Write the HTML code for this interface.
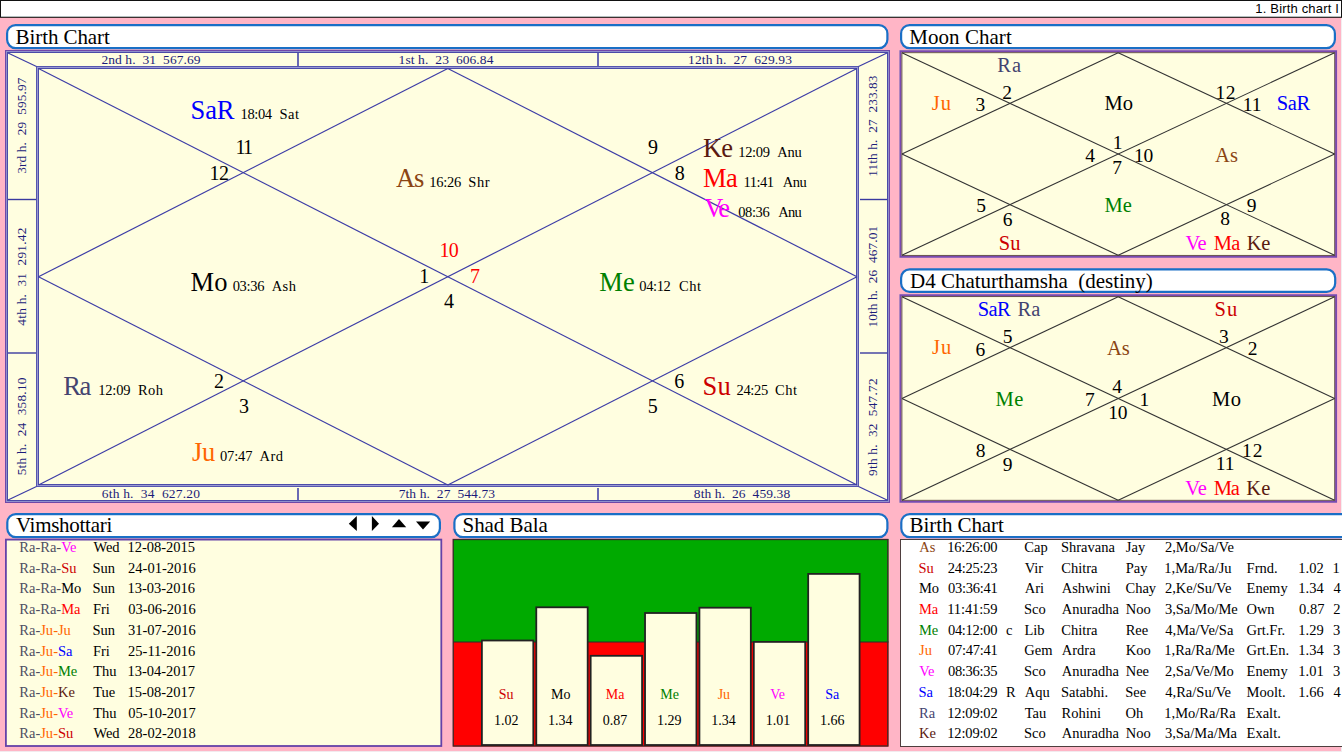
<!DOCTYPE html><html><head><meta charset="utf-8"><style>html,body{margin:0;padding:0;background:#ffb5c6;overflow:hidden;width:1342px;height:752px}svg{display:block}text{white-space:pre}</style></head><body>
<svg width="1342" height="752" viewBox="0 0 1342 752" shape-rendering="auto">
<rect x="0" y="0" width="1342" height="752" fill="#ffb5c6"/>
<rect x="0" y="751" width="1342" height="1" fill="#f2eaee"/>
<rect x="0" y="0" width="1342" height="18" fill="#fff"/>
<rect x="0" y="0" width="1342" height="1" fill="#111"/>
<rect x="0" y="0" width="1" height="18" fill="#111"/>
<rect x="1341" y="0" width="1" height="18" fill="#111"/>
<rect x="1" y="16" width="1340" height="1" fill="#b4bebe"/>
<rect x="0" y="17" width="1342" height="1" fill="#3e3030"/>
<rect x="1341" y="18" width="1" height="734" fill="#f2eef0"/>
<text x="1255.31" y="13.40" font-size="13.00" fill="#000" font-family="Liberation Sans" textLength="83.59" lengthAdjust="spacing">1. Birth chart I</text>
<rect x="7.10" y="25.10" width="880.30" height="23.00" rx="8.5" ry="8.5" fill="#fff" stroke="#1a6fc6" stroke-width="2.20"/>
<text x="15.60" y="43.70" font-size="21.00" fill="#000" font-family="Liberation Serif" textLength="94.23" lengthAdjust="spacing">Birth Chart</text>
<rect x="901.10" y="25.10" width="433.80" height="23.00" rx="8.5" ry="8.5" fill="#fff" stroke="#1a6fc6" stroke-width="2.20"/>
<text x="909.30" y="43.80" font-size="21.00" fill="#000" font-family="Liberation Serif" textLength="102.43" lengthAdjust="spacing">Moon Chart</text>
<rect x="901.10" y="269.40" width="434.10" height="22.40" rx="8.5" ry="8.5" fill="#fff" stroke="#1a6fc6" stroke-width="2.20"/>
<text x="910.10" y="288.00" font-size="21.00" fill="#000" font-family="Liberation Serif" textLength="242.63" lengthAdjust="spacing">D4 Chaturthamsha  (destiny)</text>
<rect x="7.30" y="514.10" width="432.60" height="23.00" rx="8.5" ry="8.5" fill="#fff" stroke="#1a6fc6" stroke-width="2.20"/>
<text x="15.96" y="532.30" font-size="21.00" fill="#000" font-family="Liberation Serif" textLength="96.34" lengthAdjust="spacing">Vimshottari</text>
<rect x="454.40" y="514.10" width="433.00" height="23.00" rx="8.5" ry="8.5" fill="#fff" stroke="#1a6fc6" stroke-width="2.20"/>
<text x="462.50" y="532.30" font-size="21.00" fill="#000" font-family="Liberation Serif" textLength="85.29" lengthAdjust="spacing">Shad Bala</text>
<rect x="901.30" y="514.10" width="457.60" height="23.00" rx="8.5" ry="8.5" fill="#fff" stroke="#1a6fc6" stroke-width="2.20"/>
<text x="909.60" y="532.30" font-size="21.00" fill="#000" font-family="Liberation Serif" textLength="94.23" lengthAdjust="spacing">Birth Chart</text>
<rect x="5.0" y="50.0" width="885.0" height="453.0" fill="#fffee0"/>
<rect x="5.5" y="50.5" width="884.0" height="452.0" fill="none" stroke="#7048a8" stroke-width="1"/>
<rect x="6.5" y="51.5" width="882.0" height="450.0" fill="none" stroke="#9090cc" stroke-width="1"/>
<rect x="7.5" y="52.5" width="880.0" height="448.0" fill="none" stroke="#4a4aa8" stroke-width="1"/>
<rect x="36.5" y="66.5" width="822" height="420" fill="none" stroke="#5656ae" stroke-width="1"/>
<rect x="37.5" y="67.5" width="820" height="418" fill="none" stroke="#9a9ad2" stroke-width="1"/>
<rect x="38.5" y="68.5" width="818" height="416" fill="none" stroke="#4c4ca8" stroke-width="1"/>
<line x1="298.0" y1="53.0" x2="298.0" y2="66.0" stroke="#5a5ab0" stroke-width="1.8"/>
<line x1="298.0" y1="488.0" x2="298.0" y2="500.0" stroke="#5a5ab0" stroke-width="1.8"/>
<line x1="598.0" y1="53.0" x2="598.0" y2="66.0" stroke="#5a5ab0" stroke-width="1.8"/>
<line x1="598.0" y1="488.0" x2="598.0" y2="500.0" stroke="#5a5ab0" stroke-width="1.8"/>
<line x1="8.0" y1="199.5" x2="36.0" y2="199.5" stroke="#3a3aa0" stroke-width="1.4"/>
<line x1="860.0" y1="199.5" x2="887.0" y2="199.5" stroke="#3a3aa0" stroke-width="1.4"/>
<line x1="8.0" y1="353.0" x2="36.0" y2="353.0" stroke="#3a3aa0" stroke-width="1.4"/>
<line x1="860.0" y1="353.0" x2="887.0" y2="353.0" stroke="#3a3aa0" stroke-width="1.4"/>
<line x1="8.0" y1="53.0" x2="36.5" y2="66.5" stroke="#3c3ca6" stroke-width="1.2"/>
<line x1="887.0" y1="53.0" x2="858.5" y2="66.5" stroke="#3c3ca6" stroke-width="1.2"/>
<line x1="8.0" y1="500.0" x2="36.5" y2="486.5" stroke="#3c3ca6" stroke-width="1.2"/>
<line x1="887.0" y1="500.0" x2="858.5" y2="486.5" stroke="#3c3ca6" stroke-width="1.2"/>
<line x1="38.5" y1="68.5" x2="857.0" y2="485.0" stroke="#3c3ca6" stroke-width="1.2"/>
<line x1="857.0" y1="68.5" x2="38.5" y2="485.0" stroke="#3c3ca6" stroke-width="1.2"/>
<line x1="447.8" y1="68.5" x2="857.0" y2="276.8" stroke="#3c3ca6" stroke-width="1.2"/>
<line x1="857.0" y1="276.8" x2="447.8" y2="485.0" stroke="#3c3ca6" stroke-width="1.2"/>
<line x1="447.8" y1="485.0" x2="38.5" y2="276.8" stroke="#3c3ca6" stroke-width="1.2"/>
<line x1="38.5" y1="276.8" x2="447.8" y2="68.5" stroke="#3c3ca6" stroke-width="1.2"/>
<text x="101.41" y="63.60" font-size="13.50" fill="#1c1c7a" font-family="Liberation Serif" textLength="99.15" lengthAdjust="spacing">2nd h.  31  567.69</text>
<text x="398.61" y="63.60" font-size="13.50" fill="#1c1c7a" font-family="Liberation Serif" textLength="94.80" lengthAdjust="spacing">1st h.  23  606.84</text>
<text x="688.11" y="63.60" font-size="13.50" fill="#1c1c7a" font-family="Liberation Serif" textLength="103.81" lengthAdjust="spacing">12th h.  27  629.93</text>
<text x="101.72" y="497.50" font-size="13.50" fill="#1c1c7a" font-family="Liberation Serif" textLength="98.29" lengthAdjust="spacing">6th h.  34  627.20</text>
<text x="398.67" y="497.50" font-size="13.50" fill="#1c1c7a" font-family="Liberation Serif" textLength="96.29" lengthAdjust="spacing">7th h.  27  544.73</text>
<text x="693.85" y="497.50" font-size="13.50" fill="#1c1c7a" font-family="Liberation Serif" textLength="96.30" lengthAdjust="spacing">8th h.  26  459.38</text>
<text x="0" y="0" font-size="13.3" fill="#1c1c7a" font-family="Liberation Serif" textLength="96.12" lengthAdjust="spacing" transform="translate(25.50 173.74) rotate(-90)">3rd h.  29  595.97</text>
<text x="0" y="0" font-size="13.3" fill="#1c1c7a" font-family="Liberation Serif" textLength="98.19" lengthAdjust="spacing" transform="translate(25.50 325.76) rotate(-90)">4th h.  31  291.42</text>
<text x="0" y="0" font-size="13.3" fill="#1c1c7a" font-family="Liberation Serif" textLength="97.88" lengthAdjust="spacing" transform="translate(25.50 475.37) rotate(-90)">5th h.  24  358.10</text>
<text x="0" y="0" font-size="13.3" fill="#1c1c7a" font-family="Liberation Serif" textLength="101.29" lengthAdjust="spacing" transform="translate(876.60 176.77) rotate(-90)">11th h.  27  233.83</text>
<text x="0" y="0" font-size="13.3" fill="#1c1c7a" font-family="Liberation Serif" textLength="101.57" lengthAdjust="spacing" transform="translate(876.60 327.47) rotate(-90)">10th h.  26  467.01</text>
<text x="0" y="0" font-size="13.3" fill="#1c1c7a" font-family="Liberation Serif" textLength="97.56" lengthAdjust="spacing" transform="translate(876.60 475.93) rotate(-90)">9th h.  32  547.72</text>
<text x="190.43" y="118.60" font-size="26.50" fill="#0000ff" font-family="Liberation Serif" textLength="44.11" lengthAdjust="spacing">SaR</text>
<text x="240.53" y="118.60" font-size="14.50" fill="#000" font-family="Liberation Serif" textLength="31.50" lengthAdjust="spacing">18:04</text>
<text x="279.43" y="118.60" font-size="14.50" fill="#000" font-family="Liberation Serif" textLength="19.65" lengthAdjust="spacing">Sat</text>
<text x="395.94" y="187.00" font-size="26.50" fill="#8b4513" font-family="Liberation Serif" textLength="28.32" lengthAdjust="spacing">As</text>
<text x="429.33" y="187.00" font-size="14.50" fill="#000" font-family="Liberation Serif" textLength="31.91" lengthAdjust="spacing">16:26</text>
<text x="468.23" y="187.00" font-size="14.50" fill="#000" font-family="Liberation Serif" textLength="21.40" lengthAdjust="spacing">Shr</text>
<text x="703.04" y="157.00" font-size="26.50" fill="#5a1a10" font-family="Liberation Serif" textLength="29.88" lengthAdjust="spacing">Ke</text>
<text x="738.23" y="157.00" font-size="14.50" fill="#000" font-family="Liberation Serif" textLength="31.67" lengthAdjust="spacing">12:09</text>
<text x="777.36" y="157.00" font-size="14.50" fill="#000" font-family="Liberation Serif" textLength="24.29" lengthAdjust="spacing">Anu</text>
<text x="703.04" y="186.80" font-size="26.50" fill="#ff0000" font-family="Liberation Serif" textLength="34.63" lengthAdjust="spacing">Ma</text>
<text x="743.53" y="186.80" font-size="14.50" fill="#000" font-family="Liberation Serif" textLength="30.35" lengthAdjust="spacing">11:41</text>
<text x="782.66" y="186.80" font-size="14.50" fill="#000" font-family="Liberation Serif" textLength="24.19" lengthAdjust="spacing">Anu</text>
<text x="704.20" y="216.70" font-size="26.50" fill="#ff00ff" font-family="Liberation Serif" textLength="25.82" lengthAdjust="spacing">Ve</text>
<text x="738.25" y="216.70" font-size="14.50" fill="#000" font-family="Liberation Serif" textLength="31.48" lengthAdjust="spacing">08:36</text>
<text x="778.16" y="216.70" font-size="14.50" fill="#000" font-family="Liberation Serif" textLength="23.49" lengthAdjust="spacing">Anu</text>
<text x="190.54" y="290.50" font-size="26.50" fill="#000000" font-family="Liberation Serif" textLength="36.87" lengthAdjust="spacing">Mo</text>
<text x="232.65" y="290.50" font-size="14.50" fill="#000" font-family="Liberation Serif" textLength="31.78" lengthAdjust="spacing">03:36</text>
<text x="271.66" y="290.50" font-size="14.50" fill="#000" font-family="Liberation Serif" textLength="24.33" lengthAdjust="spacing">Ash</text>
<text x="599.14" y="290.70" font-size="26.50" fill="#008000" font-family="Liberation Serif" textLength="35.58" lengthAdjust="spacing">Me</text>
<text x="639.35" y="290.70" font-size="14.50" fill="#000" font-family="Liberation Serif" textLength="31.45" lengthAdjust="spacing">04:12</text>
<text x="678.91" y="290.70" font-size="14.50" fill="#000" font-family="Liberation Serif" textLength="22.18" lengthAdjust="spacing">Cht</text>
<text x="63.24" y="394.50" font-size="26.50" fill="#444470" font-family="Liberation Serif" textLength="28.13" lengthAdjust="spacing">Ra</text>
<text x="98.13" y="394.50" font-size="14.50" fill="#000" font-family="Liberation Serif" textLength="32.47" lengthAdjust="spacing">12:09</text>
<text x="138.08" y="394.50" font-size="14.50" fill="#000" font-family="Liberation Serif" textLength="24.81" lengthAdjust="spacing">Roh</text>
<text x="191.94" y="460.60" font-size="26.50" fill="#ff6600" font-family="Liberation Serif" textLength="23.41" lengthAdjust="spacing">Ju</text>
<text x="219.95" y="460.60" font-size="14.50" fill="#000" font-family="Liberation Serif" textLength="32.47" lengthAdjust="spacing">07:47</text>
<text x="259.46" y="460.60" font-size="14.50" fill="#000" font-family="Liberation Serif" textLength="23.62" lengthAdjust="spacing">Ard</text>
<text x="702.53" y="394.70" font-size="26.50" fill="#cc0000" font-family="Liberation Serif" textLength="28.23" lengthAdjust="spacing">Su</text>
<text x="736.46" y="394.70" font-size="14.50" fill="#000" font-family="Liberation Serif" textLength="31.70" lengthAdjust="spacing">24:25</text>
<text x="774.91" y="394.70" font-size="14.50" fill="#000" font-family="Liberation Serif" textLength="22.18" lengthAdjust="spacing">Cht</text>
<text x="235.44" y="153.60" font-size="20.00" fill="#000" font-family="Liberation Serif" textLength="17.56" lengthAdjust="spacing">11</text>
<text x="209.44" y="179.80" font-size="20.00" fill="#000" font-family="Liberation Serif" textLength="19.56" lengthAdjust="spacing">12</text>
<text x="647.96" y="154.00" font-size="20.00" fill="#000" font-family="Liberation Serif">9</text>
<text x="674.74" y="180.10" font-size="20.00" fill="#000" font-family="Liberation Serif">8</text>
<text x="439.54" y="256.60" font-size="20.00" fill="#ff0000" font-family="Liberation Serif" textLength="19.22" lengthAdjust="spacing">10</text>
<text x="419.24" y="283.20" font-size="20.00" fill="#000" font-family="Liberation Serif">1</text>
<text x="469.88" y="282.60" font-size="20.00" fill="#ff0000" font-family="Liberation Serif">7</text>
<text x="443.91" y="308.30" font-size="20.00" fill="#000" font-family="Liberation Serif">4</text>
<text x="214.02" y="388.00" font-size="20.00" fill="#000" font-family="Liberation Serif">2</text>
<text x="239.04" y="413.10" font-size="20.00" fill="#000" font-family="Liberation Serif">3</text>
<text x="674.14" y="387.90" font-size="20.00" fill="#000" font-family="Liberation Serif">6</text>
<text x="647.84" y="412.70" font-size="20.00" fill="#000" font-family="Liberation Serif">5</text>
<rect x="899.4" y="50.2" width="437.7" height="207.6" fill="#fffee0"/>
<rect x="900.4" y="51.2" width="435.7" height="205.6" fill="none" stroke="#7a48b0" stroke-width="2"/>
<rect x="901.9" y="52.7" width="432.8" height="202.7" fill="none" stroke="#584040" stroke-width="0.9"/>
<line x1="901.9" y1="52.7" x2="1334.6" y2="255.3" stroke="#333" stroke-width="1.1"/>
<line x1="1334.6" y1="52.7" x2="901.9" y2="255.3" stroke="#333" stroke-width="1.1"/>
<line x1="1118.2" y1="52.7" x2="1334.6" y2="154.0" stroke="#333" stroke-width="1.1"/>
<line x1="1334.6" y1="154.0" x2="1118.2" y2="255.3" stroke="#333" stroke-width="1.1"/>
<line x1="1118.2" y1="255.3" x2="901.9" y2="154.0" stroke="#333" stroke-width="1.1"/>
<line x1="901.9" y1="154.0" x2="1118.2" y2="52.7" stroke="#333" stroke-width="1.1"/>
<rect x="899.4" y="294.2" width="437.7" height="208.6" fill="#fffee0"/>
<rect x="900.4" y="295.2" width="435.7" height="206.6" fill="none" stroke="#7a48b0" stroke-width="2"/>
<rect x="901.9" y="296.6" width="432.8" height="203.7" fill="none" stroke="#584040" stroke-width="0.9"/>
<line x1="901.9" y1="296.7" x2="1334.6" y2="500.3" stroke="#333" stroke-width="1.1"/>
<line x1="1334.6" y1="296.7" x2="901.9" y2="500.3" stroke="#333" stroke-width="1.1"/>
<line x1="1118.2" y1="296.7" x2="1334.6" y2="398.5" stroke="#333" stroke-width="1.1"/>
<line x1="1334.6" y1="398.5" x2="1118.2" y2="500.3" stroke="#333" stroke-width="1.1"/>
<line x1="1118.2" y1="500.3" x2="901.9" y2="398.5" stroke="#333" stroke-width="1.1"/>
<line x1="901.9" y1="398.5" x2="1118.2" y2="296.7" stroke="#333" stroke-width="1.1"/>
<text x="997.31" y="72.20" font-size="20.50" fill="#444470" font-family="Liberation Serif" textLength="23.77" lengthAdjust="spacing">Ra</text>
<text x="1002.14" y="98.50" font-size="19.50" fill="#000" font-family="Liberation Serif">2</text>
<text x="975.57" y="111.30" font-size="19.50" fill="#000" font-family="Liberation Serif">3</text>
<text x="931.77" y="110.20" font-size="20.50" fill="#ff6600" font-family="Liberation Serif" textLength="19.28" lengthAdjust="spacing">Ju</text>
<text x="1085.22" y="161.80" font-size="19.50" fill="#000" font-family="Liberation Serif">4</text>
<text x="976.17" y="212.20" font-size="19.50" fill="#000" font-family="Liberation Serif">5</text>
<text x="1002.76" y="226.00" font-size="19.50" fill="#000" font-family="Liberation Serif">6</text>
<text x="998.83" y="250.30" font-size="20.50" fill="#cc0000" font-family="Liberation Serif" textLength="21.72" lengthAdjust="spacing">Su</text>
<text x="1215.59" y="98.80" font-size="19.50" fill="#000" font-family="Liberation Serif" textLength="19.89" lengthAdjust="spacing">12</text>
<text x="1242.69" y="111.40" font-size="19.50" fill="#000" font-family="Liberation Serif" textLength="18.69" lengthAdjust="spacing">11</text>
<text x="1276.83" y="110.20" font-size="20.50" fill="#0000ff" font-family="Liberation Serif" textLength="33.40" lengthAdjust="spacing">SaR</text>
<text x="1104.51" y="110.10" font-size="20.50" fill="#000" font-family="Liberation Serif" textLength="28.37" lengthAdjust="spacing">Mo</text>
<text x="1112.69" y="149.20" font-size="19.50" fill="#000" font-family="Liberation Serif">1</text>
<text x="1112.21" y="173.90" font-size="19.50" fill="#000" font-family="Liberation Serif">7</text>
<text x="1134.09" y="161.80" font-size="19.50" fill="#000" font-family="Liberation Serif" textLength="19.26" lengthAdjust="spacing">10</text>
<text x="1215.10" y="161.70" font-size="20.50" fill="#8b4513" font-family="Liberation Serif" textLength="22.94" lengthAdjust="spacing">As</text>
<text x="1104.51" y="211.60" font-size="20.50" fill="#008000" font-family="Liberation Serif" textLength="27.40" lengthAdjust="spacing">Me</text>
<text x="1246.67" y="212.30" font-size="19.50" fill="#000" font-family="Liberation Serif">9</text>
<text x="1220.26" y="225.20" font-size="19.50" fill="#000" font-family="Liberation Serif">8</text>
<text x="1185.57" y="250.40" font-size="20.50" fill="#ff00ff" font-family="Liberation Serif" textLength="20.94" lengthAdjust="spacing">Ve</text>
<text x="1213.81" y="250.40" font-size="20.50" fill="#ff0000" font-family="Liberation Serif" textLength="26.57" lengthAdjust="spacing">Ma</text>
<text x="1246.71" y="250.40" font-size="20.50" fill="#5a1a10" font-family="Liberation Serif" textLength="23.60" lengthAdjust="spacing">Ke</text>
<text x="977.63" y="316.00" font-size="20.50" fill="#0000ff" font-family="Liberation Serif" textLength="33.00" lengthAdjust="spacing">SaR</text>
<text x="1017.41" y="316.00" font-size="20.50" fill="#444470" font-family="Liberation Serif" textLength="22.87" lengthAdjust="spacing">Ra</text>
<text x="1002.87" y="343.00" font-size="19.50" fill="#000" font-family="Liberation Serif">5</text>
<text x="975.56" y="356.00" font-size="19.50" fill="#000" font-family="Liberation Serif">6</text>
<text x="931.97" y="354.40" font-size="20.50" fill="#ff6600" font-family="Liberation Serif" textLength="19.38" lengthAdjust="spacing">Ju</text>
<text x="995.41" y="405.90" font-size="20.50" fill="#008000" font-family="Liberation Serif" textLength="27.90" lengthAdjust="spacing">Me</text>
<text x="1085.11" y="406.00" font-size="19.50" fill="#000" font-family="Liberation Serif">7</text>
<text x="975.66" y="457.00" font-size="19.50" fill="#000" font-family="Liberation Serif">8</text>
<text x="1002.77" y="471.00" font-size="19.50" fill="#000" font-family="Liberation Serif">9</text>
<text x="1214.53" y="316.00" font-size="20.50" fill="#cc0000" font-family="Liberation Serif" textLength="22.82" lengthAdjust="spacing">Su</text>
<text x="1219.07" y="343.00" font-size="19.50" fill="#000" font-family="Liberation Serif">3</text>
<text x="1247.64" y="354.50" font-size="19.50" fill="#000" font-family="Liberation Serif">2</text>
<text x="1107.00" y="354.60" font-size="20.50" fill="#8b4513" font-family="Liberation Serif" textLength="22.64" lengthAdjust="spacing">As</text>
<text x="1112.22" y="393.10" font-size="19.50" fill="#000" font-family="Liberation Serif">4</text>
<text x="1108.19" y="418.80" font-size="19.50" fill="#000" font-family="Liberation Serif" textLength="19.36" lengthAdjust="spacing">10</text>
<text x="1139.39" y="406.40" font-size="19.50" fill="#000" font-family="Liberation Serif">1</text>
<text x="1212.01" y="406.00" font-size="20.50" fill="#000" font-family="Liberation Serif" textLength="29.07" lengthAdjust="spacing">Mo</text>
<text x="1241.89" y="457.00" font-size="19.50" fill="#000" font-family="Liberation Serif" textLength="20.69" lengthAdjust="spacing">12</text>
<text x="1215.79" y="470.00" font-size="19.50" fill="#000" font-family="Liberation Serif" textLength="18.59" lengthAdjust="spacing">11</text>
<text x="1185.37" y="495.30" font-size="20.50" fill="#ff00ff" font-family="Liberation Serif" textLength="21.44" lengthAdjust="spacing">Ve</text>
<text x="1213.71" y="495.30" font-size="20.50" fill="#ff0000" font-family="Liberation Serif" textLength="26.27" lengthAdjust="spacing">Ma</text>
<text x="1246.31" y="495.30" font-size="20.50" fill="#5a1a10" font-family="Liberation Serif" textLength="24.10" lengthAdjust="spacing">Ke</text>
<rect x="5.9" y="539.6" width="435.4" height="206.4" fill="#fffee0" stroke="#6442a8" stroke-width="1.8"/>
<text x="19.28" y="552.00" font-size="14.50" font-family="Liberation Serif"><tspan fill="#4e4e62">Ra</tspan><tspan fill="#4e4e62">-</tspan><tspan fill="#4e4e62">Ra</tspan><tspan fill="#4e4e62">-</tspan><tspan fill="#ff00ff">Ve</tspan></text>
<text x="93.39" y="552.00" font-size="14.50" fill="#000" font-family="Liberation Serif">Wed</text>
<text x="127.43" y="552.00" font-size="14.50" fill="#000" font-family="Liberation Serif">12-08-2015</text>
<text x="19.28" y="572.70" font-size="14.50" font-family="Liberation Serif"><tspan fill="#4e4e62">Ra</tspan><tspan fill="#4e4e62">-</tspan><tspan fill="#4e4e62">Ra</tspan><tspan fill="#4e4e62">-</tspan><tspan fill="#cc0000">Su</tspan></text>
<text x="92.43" y="572.70" font-size="14.50" fill="#000" font-family="Liberation Serif">Sun</text>
<text x="128.06" y="572.70" font-size="14.50" fill="#000" font-family="Liberation Serif">24-01-2016</text>
<text x="19.28" y="593.40" font-size="14.50" font-family="Liberation Serif"><tspan fill="#4e4e62">Ra</tspan><tspan fill="#4e4e62">-</tspan><tspan fill="#4e4e62">Ra</tspan><tspan fill="#4e4e62">-</tspan><tspan fill="#000000">Mo</tspan></text>
<text x="92.43" y="593.40" font-size="14.50" fill="#000" font-family="Liberation Serif">Sun</text>
<text x="127.43" y="593.40" font-size="14.50" fill="#000" font-family="Liberation Serif">13-03-2016</text>
<text x="19.28" y="614.10" font-size="14.50" font-family="Liberation Serif"><tspan fill="#4e4e62">Ra</tspan><tspan fill="#4e4e62">-</tspan><tspan fill="#4e4e62">Ra</tspan><tspan fill="#4e4e62">-</tspan><tspan fill="#ff0000">Ma</tspan></text>
<text x="92.98" y="614.10" font-size="14.50" fill="#000" font-family="Liberation Serif">Fri</text>
<text x="128.15" y="614.10" font-size="14.50" fill="#000" font-family="Liberation Serif">03-06-2016</text>
<text x="19.28" y="634.80" font-size="14.50" font-family="Liberation Serif"><tspan fill="#4e4e62">Ra</tspan><tspan fill="#4e4e62">-</tspan><tspan fill="#ff6600">Ju</tspan><tspan fill="#ff6600">-</tspan><tspan fill="#ff6600">Ju</tspan></text>
<text x="92.43" y="634.80" font-size="14.50" fill="#000" font-family="Liberation Serif">Sun</text>
<text x="128.01" y="634.80" font-size="14.50" fill="#000" font-family="Liberation Serif">31-07-2016</text>
<text x="19.28" y="655.50" font-size="14.50" font-family="Liberation Serif"><tspan fill="#4e4e62">Ra</tspan><tspan fill="#4e4e62">-</tspan><tspan fill="#ff6600">Ju</tspan><tspan fill="#ff6600">-</tspan><tspan fill="#0000ff">Sa</tspan></text>
<text x="92.98" y="655.50" font-size="14.50" fill="#000" font-family="Liberation Serif">Fri</text>
<text x="128.06" y="655.50" font-size="14.50" fill="#000" font-family="Liberation Serif">25-11-2016</text>
<text x="19.28" y="676.20" font-size="14.50" font-family="Liberation Serif"><tspan fill="#4e4e62">Ra</tspan><tspan fill="#4e4e62">-</tspan><tspan fill="#ff6600">Ju</tspan><tspan fill="#ff6600">-</tspan><tspan fill="#008000">Me</tspan></text>
<text x="93.14" y="676.20" font-size="14.50" fill="#000" font-family="Liberation Serif">Thu</text>
<text x="127.43" y="676.20" font-size="14.50" fill="#000" font-family="Liberation Serif">13-04-2017</text>
<text x="19.28" y="696.90" font-size="14.50" font-family="Liberation Serif"><tspan fill="#4e4e62">Ra</tspan><tspan fill="#4e4e62">-</tspan><tspan fill="#ff6600">Ju</tspan><tspan fill="#ff6600">-</tspan><tspan fill="#5a1a10">Ke</tspan></text>
<text x="93.14" y="696.90" font-size="14.50" fill="#000" font-family="Liberation Serif">Tue</text>
<text x="127.43" y="696.90" font-size="14.50" fill="#000" font-family="Liberation Serif">15-08-2017</text>
<text x="19.28" y="717.60" font-size="14.50" font-family="Liberation Serif"><tspan fill="#4e4e62">Ra</tspan><tspan fill="#4e4e62">-</tspan><tspan fill="#ff6600">Ju</tspan><tspan fill="#ff6600">-</tspan><tspan fill="#ff00ff">Ve</tspan></text>
<text x="93.14" y="717.60" font-size="14.50" fill="#000" font-family="Liberation Serif">Thu</text>
<text x="128.15" y="717.60" font-size="14.50" fill="#000" font-family="Liberation Serif">05-10-2017</text>
<text x="19.28" y="738.30" font-size="14.50" font-family="Liberation Serif"><tspan fill="#4e4e62">Ra</tspan><tspan fill="#4e4e62">-</tspan><tspan fill="#ff6600">Ju</tspan><tspan fill="#ff6600">-</tspan><tspan fill="#cc0000">Su</tspan></text>
<text x="93.39" y="738.30" font-size="14.50" fill="#000" font-family="Liberation Serif">Wed</text>
<text x="128.06" y="738.30" font-size="14.50" fill="#000" font-family="Liberation Serif">28-02-2018</text>
<path d="M348.8 523.7 L356.8 516 L356.8 531 Z" fill="#000"/>
<path d="M379 523.7 L371.9 516 L371.9 531 Z" fill="#000"/>
<path d="M391.9 527.2 L406.2 527.2 L399 518.9 Z" fill="#000"/>
<path d="M416 521.4 L430.2 521.4 L423 529.5 Z" fill="#000"/>
<rect x="453" y="539" width="435.5" height="103" fill="#00aa00"/>
<rect x="453" y="642" width="435.5" height="104.5" fill="#ff0000"/>
<line x1="453" y1="642" x2="888.5" y2="642" stroke="#2a2a2a" stroke-width="1"/>
<rect x="453.2" y="539.5" width="434.6" height="206.5" fill="none" stroke="#3a2a2a" stroke-width="1.3"/>
<rect x="481.90" y="640.50" width="51.40" height="104.50" fill="#fffee0" stroke="#222" stroke-width="1.8"/>
<text x="498.66" y="699.00" font-size="14.00" fill="#cc0000" font-family="Liberation Serif">Su</text>
<text x="493.92" y="724.50" font-size="14.00" fill="#000" font-family="Liberation Serif">1.02</text>
<rect x="536.28" y="607.30" width="51.40" height="137.70" fill="#fffee0" stroke="#222" stroke-width="1.8"/>
<text x="551.12" y="699.00" font-size="14.00" fill="#000000" font-family="Liberation Serif">Mo</text>
<text x="548.02" y="724.50" font-size="14.00" fill="#000" font-family="Liberation Serif">1.34</text>
<rect x="590.66" y="655.80" width="51.40" height="89.20" fill="#fffee0" stroke="#222" stroke-width="1.8"/>
<text x="605.72" y="699.00" font-size="14.00" fill="#ff0000" font-family="Liberation Serif">Ma</text>
<text x="602.85" y="724.50" font-size="14.00" fill="#000" font-family="Liberation Serif">0.87</text>
<rect x="645.04" y="613.00" width="51.40" height="132.00" fill="#fffee0" stroke="#222" stroke-width="1.8"/>
<text x="660.25" y="699.00" font-size="14.00" fill="#008000" font-family="Liberation Serif">Me</text>
<text x="656.96" y="724.50" font-size="14.00" fill="#000" font-family="Liberation Serif">1.29</text>
<rect x="699.42" y="607.70" width="51.40" height="137.30" fill="#fffee0" stroke="#222" stroke-width="1.8"/>
<text x="717.67" y="699.00" font-size="14.00" fill="#ff6600" font-family="Liberation Serif">Ju</text>
<text x="711.16" y="724.50" font-size="14.00" fill="#000" font-family="Liberation Serif">1.34</text>
<rect x="753.80" y="641.90" width="51.40" height="103.10" fill="#fffee0" stroke="#222" stroke-width="1.8"/>
<text x="770.30" y="699.00" font-size="14.00" fill="#ff00ff" font-family="Liberation Serif">Ve</text>
<text x="765.86" y="724.50" font-size="14.00" fill="#000" font-family="Liberation Serif">1.01</text>
<rect x="808.18" y="573.90" width="51.40" height="171.10" fill="#fffee0" stroke="#222" stroke-width="1.8"/>
<text x="825.31" y="699.00" font-size="14.00" fill="#0000ff" font-family="Liberation Serif">Sa</text>
<text x="820.02" y="724.50" font-size="14.00" fill="#000" font-family="Liberation Serif">1.66</text>
<rect x="900.5" y="539.5" width="460" height="207" fill="#fff" stroke="#4e3e3e" stroke-width="1"/>
<text x="919.26" y="551.80" font-size="14.50" fill="#8b4513" font-family="Liberation Serif">As</text>
<text x="947.23" y="551.80" font-size="14.50" fill="#000" font-family="Liberation Serif" textLength="50.23" lengthAdjust="spacing">16:26:00</text>
<text x="1024.31" y="551.80" font-size="14.50" fill="#000" font-family="Liberation Serif">Cap</text>
<text x="1060.93" y="551.80" font-size="14.50" fill="#000" font-family="Liberation Serif">Shravana</text>
<text x="1125.80" y="551.80" font-size="14.50" fill="#000" font-family="Liberation Serif">Jay</text>
<text x="1164.96" y="551.80" font-size="14.50" fill="#000" font-family="Liberation Serif">2,Mo/Sa/Ve</text>
<text x="918.43" y="572.52" font-size="14.50" fill="#cc0000" font-family="Liberation Serif">Su</text>
<text x="947.86" y="572.52" font-size="14.50" fill="#000" font-family="Liberation Serif" textLength="49.60" lengthAdjust="spacing">24:25:23</text>
<text x="1024.74" y="572.52" font-size="14.50" fill="#000" font-family="Liberation Serif">Vir</text>
<text x="1061.31" y="572.52" font-size="14.50" fill="#000" font-family="Liberation Serif">Chitra</text>
<text x="1125.68" y="572.52" font-size="14.50" fill="#000" font-family="Liberation Serif">Pay</text>
<text x="1164.33" y="572.52" font-size="14.50" fill="#000" font-family="Liberation Serif">1,Ma/Ra/Ju</text>
<text x="1246.58" y="572.52" font-size="14.50" fill="#000" font-family="Liberation Serif">Frnd.</text>
<text x="1298.33" y="572.52" font-size="14.50" fill="#000" font-family="Liberation Serif">1.02</text>
<text x="1332.53" y="572.52" font-size="14.50" fill="#000" font-family="Liberation Serif">1</text>
<text x="918.98" y="593.24" font-size="14.50" fill="#000000" font-family="Liberation Serif">Mo</text>
<text x="947.95" y="593.24" font-size="14.50" fill="#000" font-family="Liberation Serif" textLength="49.82" lengthAdjust="spacing">03:36:41</text>
<text x="1024.76" y="593.24" font-size="14.50" fill="#000" font-family="Liberation Serif">Ari</text>
<text x="1061.76" y="593.24" font-size="14.50" fill="#000" font-family="Liberation Serif">Ashwini</text>
<text x="1125.51" y="593.24" font-size="14.50" fill="#000" font-family="Liberation Serif">Chay</text>
<text x="1164.96" y="593.24" font-size="14.50" fill="#000" font-family="Liberation Serif">2,Ke/Su/Ve</text>
<text x="1246.58" y="593.24" font-size="14.50" fill="#000" font-family="Liberation Serif">Enemy</text>
<text x="1298.33" y="593.24" font-size="14.50" fill="#000" font-family="Liberation Serif">1.34</text>
<text x="1333.52" y="593.24" font-size="14.50" fill="#000" font-family="Liberation Serif">4</text>
<text x="918.98" y="613.96" font-size="14.50" fill="#ff0000" font-family="Liberation Serif">Ma</text>
<text x="947.23" y="613.96" font-size="14.50" fill="#000" font-family="Liberation Serif" textLength="50.27" lengthAdjust="spacing">11:41:59</text>
<text x="1023.93" y="613.96" font-size="14.50" fill="#000" font-family="Liberation Serif">Sco</text>
<text x="1061.76" y="613.96" font-size="14.50" fill="#000" font-family="Liberation Serif">Anuradha</text>
<text x="1125.68" y="613.96" font-size="14.50" fill="#000" font-family="Liberation Serif">Noo</text>
<text x="1164.91" y="613.96" font-size="14.50" fill="#000" font-family="Liberation Serif">3,Sa/Mo/Me</text>
<text x="1246.41" y="613.96" font-size="14.50" fill="#000" font-family="Liberation Serif">Own</text>
<text x="1299.05" y="613.96" font-size="14.50" fill="#000" font-family="Liberation Serif">0.87</text>
<text x="1333.16" y="613.96" font-size="14.50" fill="#000" font-family="Liberation Serif">2</text>
<text x="918.98" y="634.68" font-size="14.50" fill="#008000" font-family="Liberation Serif">Me</text>
<text x="947.95" y="634.68" font-size="14.50" fill="#000" font-family="Liberation Serif" textLength="49.50" lengthAdjust="spacing">04:12:00</text>
<text x="1005.95" y="634.68" font-size="14.50" fill="#000" font-family="Liberation Serif">c</text>
<text x="1024.48" y="634.68" font-size="14.50" fill="#000" font-family="Liberation Serif">Lib</text>
<text x="1061.31" y="634.68" font-size="14.50" fill="#000" font-family="Liberation Serif">Chitra</text>
<text x="1125.68" y="634.68" font-size="14.50" fill="#000" font-family="Liberation Serif">Ree</text>
<text x="1165.32" y="634.68" font-size="14.50" fill="#000" font-family="Liberation Serif">4,Ma/Ve/Sa</text>
<text x="1246.41" y="634.68" font-size="14.50" fill="#000" font-family="Liberation Serif">Grt.Fr.</text>
<text x="1298.33" y="634.68" font-size="14.50" fill="#000" font-family="Liberation Serif">1.29</text>
<text x="1333.11" y="634.68" font-size="14.50" fill="#000" font-family="Liberation Serif">3</text>
<text x="919.10" y="655.40" font-size="14.50" fill="#ff6600" font-family="Liberation Serif">Ju</text>
<text x="947.95" y="655.40" font-size="14.50" fill="#000" font-family="Liberation Serif" textLength="49.82" lengthAdjust="spacing">07:47:41</text>
<text x="1024.31" y="655.40" font-size="14.50" fill="#000" font-family="Liberation Serif">Gem</text>
<text x="1061.76" y="655.40" font-size="14.50" fill="#000" font-family="Liberation Serif">Ardra</text>
<text x="1125.68" y="655.40" font-size="14.50" fill="#000" font-family="Liberation Serif">Koo</text>
<text x="1164.33" y="655.40" font-size="14.50" fill="#000" font-family="Liberation Serif">1,Ra/Ra/Me</text>
<text x="1246.41" y="655.40" font-size="14.50" fill="#000" font-family="Liberation Serif">Grt.En.</text>
<text x="1298.33" y="655.40" font-size="14.50" fill="#000" font-family="Liberation Serif">1.34</text>
<text x="1333.11" y="655.40" font-size="14.50" fill="#000" font-family="Liberation Serif">3</text>
<text x="919.24" y="676.12" font-size="14.50" fill="#ff00ff" font-family="Liberation Serif">Ve</text>
<text x="947.95" y="676.12" font-size="14.50" fill="#000" font-family="Liberation Serif" textLength="49.52" lengthAdjust="spacing">08:36:35</text>
<text x="1023.93" y="676.12" font-size="14.50" fill="#000" font-family="Liberation Serif">Sco</text>
<text x="1061.76" y="676.12" font-size="14.50" fill="#000" font-family="Liberation Serif">Anuradha</text>
<text x="1125.68" y="676.12" font-size="14.50" fill="#000" font-family="Liberation Serif">Nee</text>
<text x="1164.96" y="676.12" font-size="14.50" fill="#000" font-family="Liberation Serif">2,Sa/Ve/Mo</text>
<text x="1246.58" y="676.12" font-size="14.50" fill="#000" font-family="Liberation Serif">Enemy</text>
<text x="1298.33" y="676.12" font-size="14.50" fill="#000" font-family="Liberation Serif">1.01</text>
<text x="1333.11" y="676.12" font-size="14.50" fill="#000" font-family="Liberation Serif">3</text>
<text x="918.43" y="696.84" font-size="14.50" fill="#0000ff" font-family="Liberation Serif">Sa</text>
<text x="947.23" y="696.84" font-size="14.50" fill="#000" font-family="Liberation Serif" textLength="50.27" lengthAdjust="spacing">18:04:29</text>
<text x="1006.08" y="696.84" font-size="14.50" fill="#000" font-family="Liberation Serif">R</text>
<text x="1024.76" y="696.84" font-size="14.50" fill="#000" font-family="Liberation Serif">Aqu</text>
<text x="1060.93" y="696.84" font-size="14.50" fill="#000" font-family="Liberation Serif">Satabhi.</text>
<text x="1125.13" y="696.84" font-size="14.50" fill="#000" font-family="Liberation Serif">See</text>
<text x="1165.32" y="696.84" font-size="14.50" fill="#000" font-family="Liberation Serif">4,Ra/Su/Ve</text>
<text x="1246.58" y="696.84" font-size="14.50" fill="#000" font-family="Liberation Serif">Moolt.</text>
<text x="1298.33" y="696.84" font-size="14.50" fill="#000" font-family="Liberation Serif">1.66</text>
<text x="1333.52" y="696.84" font-size="14.50" fill="#000" font-family="Liberation Serif">4</text>
<text x="918.98" y="717.56" font-size="14.50" fill="#444470" font-family="Liberation Serif">Ra</text>
<text x="947.23" y="717.56" font-size="14.50" fill="#000" font-family="Liberation Serif" textLength="50.47" lengthAdjust="spacing">12:09:02</text>
<text x="1024.64" y="717.56" font-size="14.50" fill="#000" font-family="Liberation Serif">Tau</text>
<text x="1061.48" y="717.56" font-size="14.50" fill="#000" font-family="Liberation Serif">Rohini</text>
<text x="1125.51" y="717.56" font-size="14.50" fill="#000" font-family="Liberation Serif">Oh</text>
<text x="1164.33" y="717.56" font-size="14.50" fill="#000" font-family="Liberation Serif">1,Mo/Ra/Ra</text>
<text x="1246.58" y="717.56" font-size="14.50" fill="#000" font-family="Liberation Serif">Exalt.</text>
<text x="918.98" y="738.28" font-size="14.50" fill="#5a1a10" font-family="Liberation Serif">Ke</text>
<text x="947.23" y="738.28" font-size="14.50" fill="#000" font-family="Liberation Serif" textLength="50.47" lengthAdjust="spacing">12:09:02</text>
<text x="1023.93" y="738.28" font-size="14.50" fill="#000" font-family="Liberation Serif">Sco</text>
<text x="1061.76" y="738.28" font-size="14.50" fill="#000" font-family="Liberation Serif">Anuradha</text>
<text x="1125.68" y="738.28" font-size="14.50" fill="#000" font-family="Liberation Serif">Noo</text>
<text x="1164.91" y="738.28" font-size="14.50" fill="#000" font-family="Liberation Serif">3,Sa/Ma/Ma</text>
<text x="1246.58" y="738.28" font-size="14.50" fill="#000" font-family="Liberation Serif">Exalt.</text>
</svg></body></html>
